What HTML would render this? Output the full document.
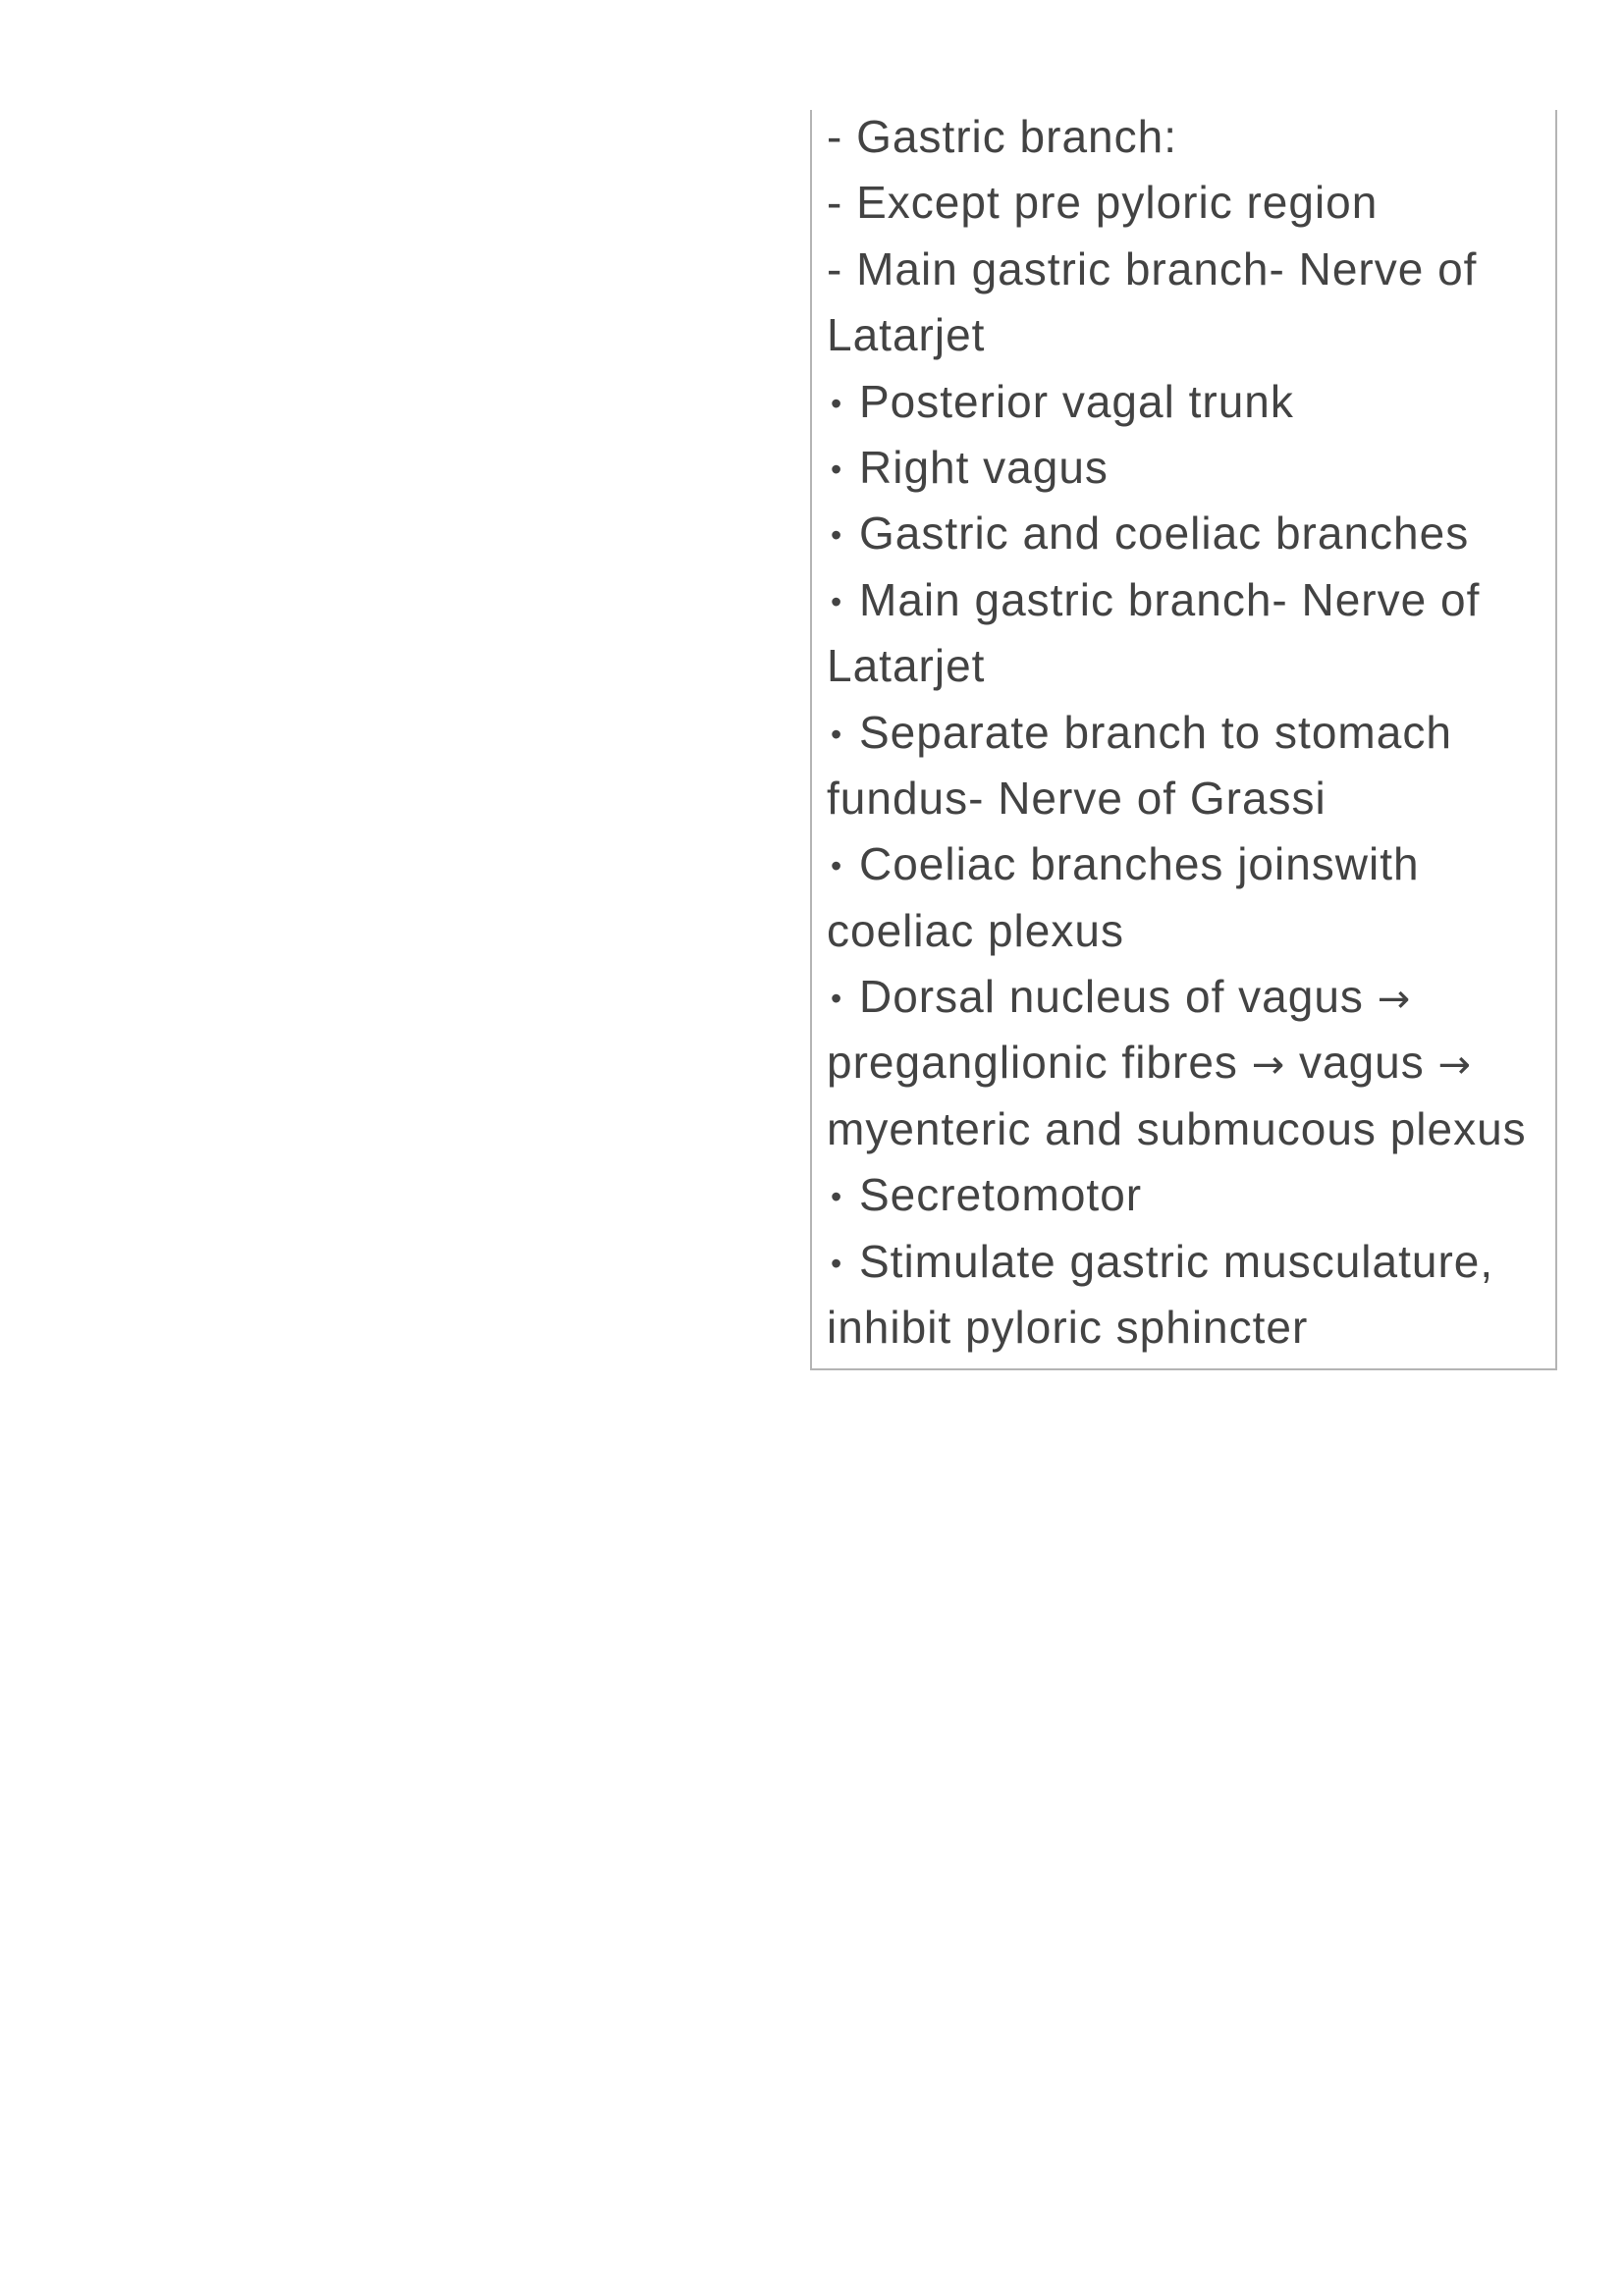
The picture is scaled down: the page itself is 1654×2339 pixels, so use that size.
<!DOCTYPE html>
<html><head><meta charset="utf-8"><style>
html,body{margin:0;padding:0;background:#fff;}
body{width:1654px;height:2339px;position:relative;overflow:hidden;}
.box{position:absolute;left:825px;top:112px;width:757px;height:1282px;border-left:2px solid #b4b4b4;border-right:2px solid #b4b4b4;border-bottom:2px solid #b4b4b4;}
.t{position:absolute;left:842px;top:106px;font-family:"Liberation Sans",sans-serif;font-size:46px;color:#434343;letter-spacing:1px;white-space:nowrap;}
.t div{height:67.4px;line-height:67.4px;overflow:visible;}
.b{display:inline-block;width:33px;font-size:32px;line-height:0;vertical-align:3px;padding-left:4px;box-sizing:border-box;}
.a{font-family:"DejaVu Sans",sans-serif;font-size:40px;line-height:0;}
</style></head><body>
<div class="box"></div>
<div class="t">
<div>- Gastric branch:</div>
<div>- Except pre pyloric region</div>
<div>- Main gastric branch- Nerve of</div>
<div>Latarjet</div>
<div><span class="b">•</span>Posterior vagal trunk</div>
<div><span class="b">•</span>Right vagus</div>
<div><span class="b">•</span>Gastric and coeliac branches</div>
<div><span class="b">•</span>Main gastric branch- Nerve of</div>
<div>Latarjet</div>
<div><span class="b">•</span>Separate branch to stomach</div>
<div>fundus- Nerve of Grassi</div>
<div><span class="b">•</span>Coeliac branches joinswith</div>
<div>coeliac plexus</div>
<div><span class="b">•</span>Dorsal nucleus of vagus <span class="a">→</span></div>
<div>preganglionic fibres <span class="a">→</span> vagus <span class="a">→</span></div>
<div>myenteric and submucous plexus</div>
<div><span class="b">•</span>Secretomotor</div>
<div><span class="b">•</span>Stimulate gastric musculature,</div>
<div>inhibit pyloric sphincter</div>
</div>
</body></html>
